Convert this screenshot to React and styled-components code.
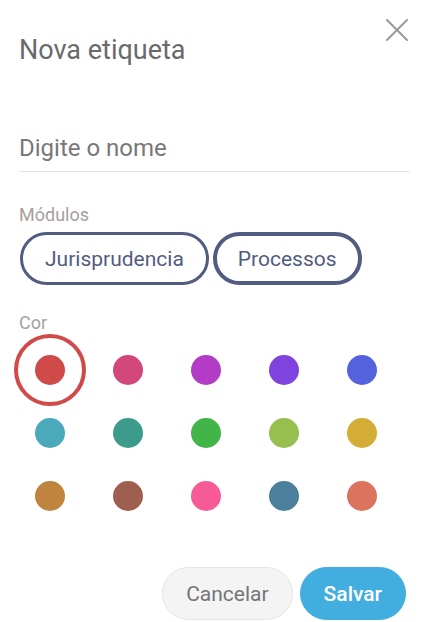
import React, { useState } from 'react'
import styled, { createGlobalStyle } from 'styled-components'

const GlobalStyle = createGlobalStyle`
  html, body {
    margin: 0;
    padding: 0;
    background: #ffffff;
  }
  body {
    font-family: Roboto, "Liberation Sans", Arial, sans-serif;
  }
  * {
    box-sizing: border-box;
  }
`

const Modal = styled.div`
  width: 430px;
  height: 622px;
  padding: 0 21px 0 19px;
  display: flex;
  flex-direction: column;
  background: #fff;
`

const Header = styled.div`
  display: flex;
  justify-content: space-between;
  align-items: flex-start;
  padding-top: 19px;
`

const Title = styled.h1`
  margin: 15px 0 0;
  font-size: 27px;
  line-height: 32px;
  font-weight: 400;
  color: #6a6a6a;
`

const CloseButton = styled.button`
  width: 22px;
  height: 22px;
  margin-right: 1px;
  padding: 0;
  border: none;
  background: none;
  cursor: pointer;
  display: block;
  & svg {
    display: block;
  }
`

const NameInput = styled.input`
  display: block;
  width: 100%;
  height: 38px;
  margin-top: 68px;
  padding: 0 0 9px;
  border: none;
  border-bottom: 1px solid #e2e2e2;
  outline: none;
  font-family: inherit;
  font-size: 24px;
  line-height: 28px;
  color: #555;
  &::placeholder {
    color: #777;
  }
`

const Label = styled.div`
  margin-top: ${(p) => p.$top}px;
  font-size: 18px;
  line-height: 21px;
  color: ${(p) => p.$color || '#a3a3a3'};
`

const ChipRow = styled.div`
  display: flex;
  gap: 4px;
  margin-top: 7px;
  padding-left: 1px;
`

const Chip = styled.button`
  height: 53px;
  padding: 0 ${(p) => (p.$focused ? 21 : 22)}px;
  border: ${(p) => (p.$focused ? 4 : 3)}px solid #525c80;
  border-radius: 27px;
  background: #fff;
  font-family: inherit;
  font-size: 21px;
  color: #525c80;
  cursor: pointer;
`

const ColorGrid = styled.div`
  display: grid;
  grid-template-columns: repeat(5, 72px);
  grid-auto-rows: 63px;
  column-gap: 6px;
  margin: 5px 0 0 -5px;
`

const Swatch = styled.button`
  width: 72px;
  height: 72px;
  margin: -4.5px 0;
  padding: 0;
  border: 4px solid ${(p) => (p.$selected ? p.$color : 'transparent')};
  border-radius: 50%;
  background: none;
  display: flex;
  align-items: center;
  justify-content: center;
  cursor: pointer;
`

const Dot = styled.span`
  width: 30px;
  height: 30px;
  border-radius: 50%;
  background: ${(p) => p.$color};
`

const Footer = styled.div`
  display: flex;
  justify-content: flex-end;
  gap: 7px;
  margin-top: 40px;
  padding-right: 3px;
`

const ActionButton = styled.button`
  height: 53px;
  padding: 0 23px;
  border-radius: 27px;
  font-family: inherit;
  font-size: 21px;
  cursor: pointer;
  border: 1px solid ${(p) => (p.$primary ? '#42aee0' : '#e4e4e4')};
  background: ${(p) => (p.$primary ? '#42aee0' : '#f4f4f4')};
  color: ${(p) => (p.$primary ? '#fff' : '#757575')};
  font-weight: ${(p) => (p.$primary ? 500 : 400)};
`

const colors = [
  '#d04a4a', '#d3487a', '#b33cc6', '#7f44de', '#5562dd',
  '#4aa9bb', '#3d9b8c', '#42b548', '#97bf4f', '#d4ad36',
  '#bf843e', '#9e5f4f', '#f65b98', '#4b7f9b', '#dc735c',
]

export default function App() {
  const [selected, setSelected] = useState(0)

  return (
    <>
      <GlobalStyle />
      <Modal>
        <Header>
          <Title>Nova etiqueta</Title>
          <CloseButton aria-label="Fechar">
            <svg width="22" height="22" viewBox="0 0 22 22">
              <path d="M1 1L21 21M21 1L1 21" stroke="#9a9a9a" strokeWidth="2" strokeLinecap="square" />
            </svg>
          </CloseButton>
        </Header>

        <NameInput placeholder="Digite o nome" />

        <Label $top={32} $color="#a89e9e">Módulos</Label>
        <ChipRow>
          <Chip>Jurisprudencia</Chip>
          <Chip $focused>Processos</Chip>
        </ChipRow>

        <Label $top={27}>Cor</Label>
        <ColorGrid>
          {colors.map((c, i) => (
            <Swatch key={c} $color={c} $selected={i === selected} onClick={() => setSelected(i)}>
              <Dot $color={c} />
            </Swatch>
          ))}
        </ColorGrid>

        <Footer>
          <ActionButton>Cancelar</ActionButton>
          <ActionButton $primary>Salvar</ActionButton>
        </Footer>
      </Modal>
    </>
  )
}
